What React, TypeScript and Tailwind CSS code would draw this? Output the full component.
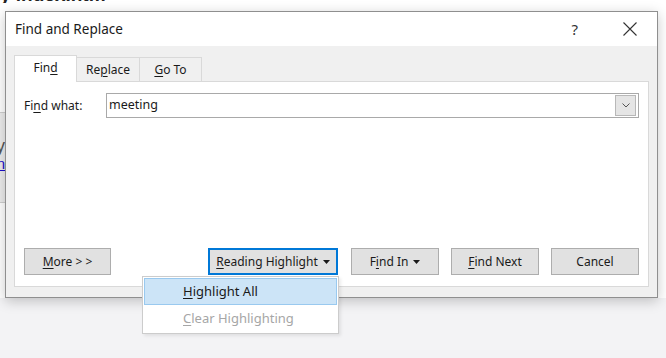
import * as React from "react";

const FONT = { fontFamily: '"Noto Sans", "Open Sans", sans-serif' };
const ARIAL = { fontFamily: '"Liberation Sans", Arial, sans-serif' };

// access key underline
const K: React.FC<{ children: React.ReactNode }> = ({ children }) => (
  <span className="underline underline-offset-2 decoration-1">{children}</span>
);

const Caret: React.FC = () => (
  <svg width="7" height="4" viewBox="0 0 7 4" className="ml-[5px] mt-[1px]">
    <path d="M0 0 H7 L3.5 4 Z" fill="#1a1a1a" />
  </svg>
);

const DlgButton: React.FC<{ children: React.ReactNode; focused?: boolean; width?: string }> = ({
  children,
  focused,
  width = "w-[88px]",
}) => (
  <div
    className={`${width} h-[27px] flex items-center justify-center bg-[#e1e1e1] text-[12px] text-[#1a1a1a] ${
      focused ? "border-2 border-[#0078d7]" : "border border-[#adadad]"
    }`}
  >
    {children}
  </div>
);

export default function App() {
  return (
    <div className="relative w-[666px] h-[358px] overflow-hidden bg-[#f3f3f5]" style={FONT}>
      {/* page behind the dialog */}
      <div className="h-[298px] bg-white flex flex-col">
        <div className="h-[3px] overflow-hidden">
          <div
            className="-mt-[15px] text-[19px] font-bold text-[#222] whitespace-nowrap leading-[19px]"
            style={ARIAL}
          >
            y index.htm
          </div>
        </div>
        <div className="mt-[109px] w-[5px] border-t border-[#cfcfcf] h-[90px] bg-[#ececec] flex flex-col overflow-hidden">
          <div className="flex justify-end mt-[24px] text-[18px] leading-[18px] text-[#555] whitespace-nowrap" style={ARIAL}>
            y
          </div>
          <div className="flex justify-end mt-[1px] text-[15px] leading-[15px] text-[#1a0dcc] underline whitespace-nowrap" style={ARIAL}>
            n
          </div>
        </div>
        <div className="w-[5px] border-t border-[#cfcfcf]" />
      </div>

      {/* dialog window */}
      <div className="absolute left-[5px] top-[11px] w-[653px] h-[287px] border border-[#8f8f8f] bg-[#f0f0f0] flex flex-col shadow-[0_3px_12px_rgba(0,0,0,0.22)]">
        {/* title bar */}
        <div className="h-[34px] bg-white flex items-center pl-[9px] pr-[20px] text-[#1a1a1a]">
          <span className="text-[13.5px]">Find and Replace</span>
          <span className="ml-auto text-[15px] text-[#333]">?</span>
          <svg width="14" height="14" viewBox="0 0 14 14" className="ml-[45px]">
            <path d="M0.5 0.5 L13.5 13.5 M13.5 0.5 L0.5 13.5" stroke="#333" strokeWidth="1.1" />
          </svg>
        </div>

        {/* body */}
        <div className="flex-1 flex flex-col px-[8px] pt-[10px] pb-[10px]">
          {/* tabs */}
          <div className="flex items-end h-[26px] text-[12px] text-[#1a1a1a] relative z-10 -mb-px">
            <div className="w-[63px] h-[27px] bg-white border border-b-0 border-[#d9d9d9] flex items-center justify-center pb-[2px]">
              Fin<K>d</K>
            </div>
            <div className="w-[63px] h-[25px] border border-l-0 border-b-0 border-[#d9d9d9] flex items-center justify-center">
              Re<K>p</K>lace
            </div>
            <div className="w-[62px] h-[25px] border border-l-0 border-b-0 border-[#d9d9d9] flex items-center justify-center">
              <K>G</K>o To
            </div>
          </div>

          {/* panel */}
          <div className="flex-1 bg-white border border-[#d9d9d9] pl-[9px] pr-[9px] pt-[11px] pb-[11px] flex flex-col justify-between">
            <div className="flex items-center text-[12px] text-[#1a1a1a]">
              <span className="w-[82px]">
                Fi<K>n</K>d what:
              </span>
              <div className="flex-1 h-[25px] border border-[#a9a9a9] flex items-center pl-[2px] pr-[2px]">
                <span className="text-[12.5px] flex-1">meeting</span>
                <div className="w-[21px] h-[21px] bg-[#e5e5e5] border border-[#b8b8b8] flex items-center justify-center">
                  <svg width="8" height="5" viewBox="0 0 8 5">
                    <path d="M0.5 0.5 L4 4 L7.5 0.5" stroke="#555" strokeWidth="1" fill="none" />
                  </svg>
                </div>
              </div>
            </div>

            <div className="flex items-center -mt-px">
              <DlgButton width="w-[87px]">
                <K>M</K>ore &gt; &gt;
              </DlgButton>
              <div className="ml-auto flex items-center gap-[12px]">
                <div className="relative mr-px">
                  <DlgButton focused width="w-[130px]">
                    <K>R</K>eading Highlight
                    <Caret />
                  </DlgButton>
                  {/* dropdown menu */}
                  <div className="absolute right-[-1px] top-[28px] w-[197px] h-[58px] bg-white border border-[#cccccc] p-px flex flex-col text-[13px] shadow-[2px_2px_3px_rgba(0,0,0,0.08)]">
                    <div className="h-[27px] bg-[#cce4f7] border border-[#99c9ef] flex items-center pl-[38px] text-[#1a1a1a]">
                      <K>H</K>ighlight All
                    </div>
                    <div className="h-[27px] mt-[1px] flex items-center pl-[39px] text-[#a6a6a6]">
                      <K>C</K>lear Highlighting
                    </div>
                  </div>
                </div>
                <DlgButton>
                  F<K>i</K>nd In
                  <Caret />
                </DlgButton>
                <DlgButton>
                  <K>F</K>ind Next
                </DlgButton>
                <DlgButton>Cancel</DlgButton>
              </div>
            </div>
          </div>
        </div>
      </div>
    </div>
  );
}
